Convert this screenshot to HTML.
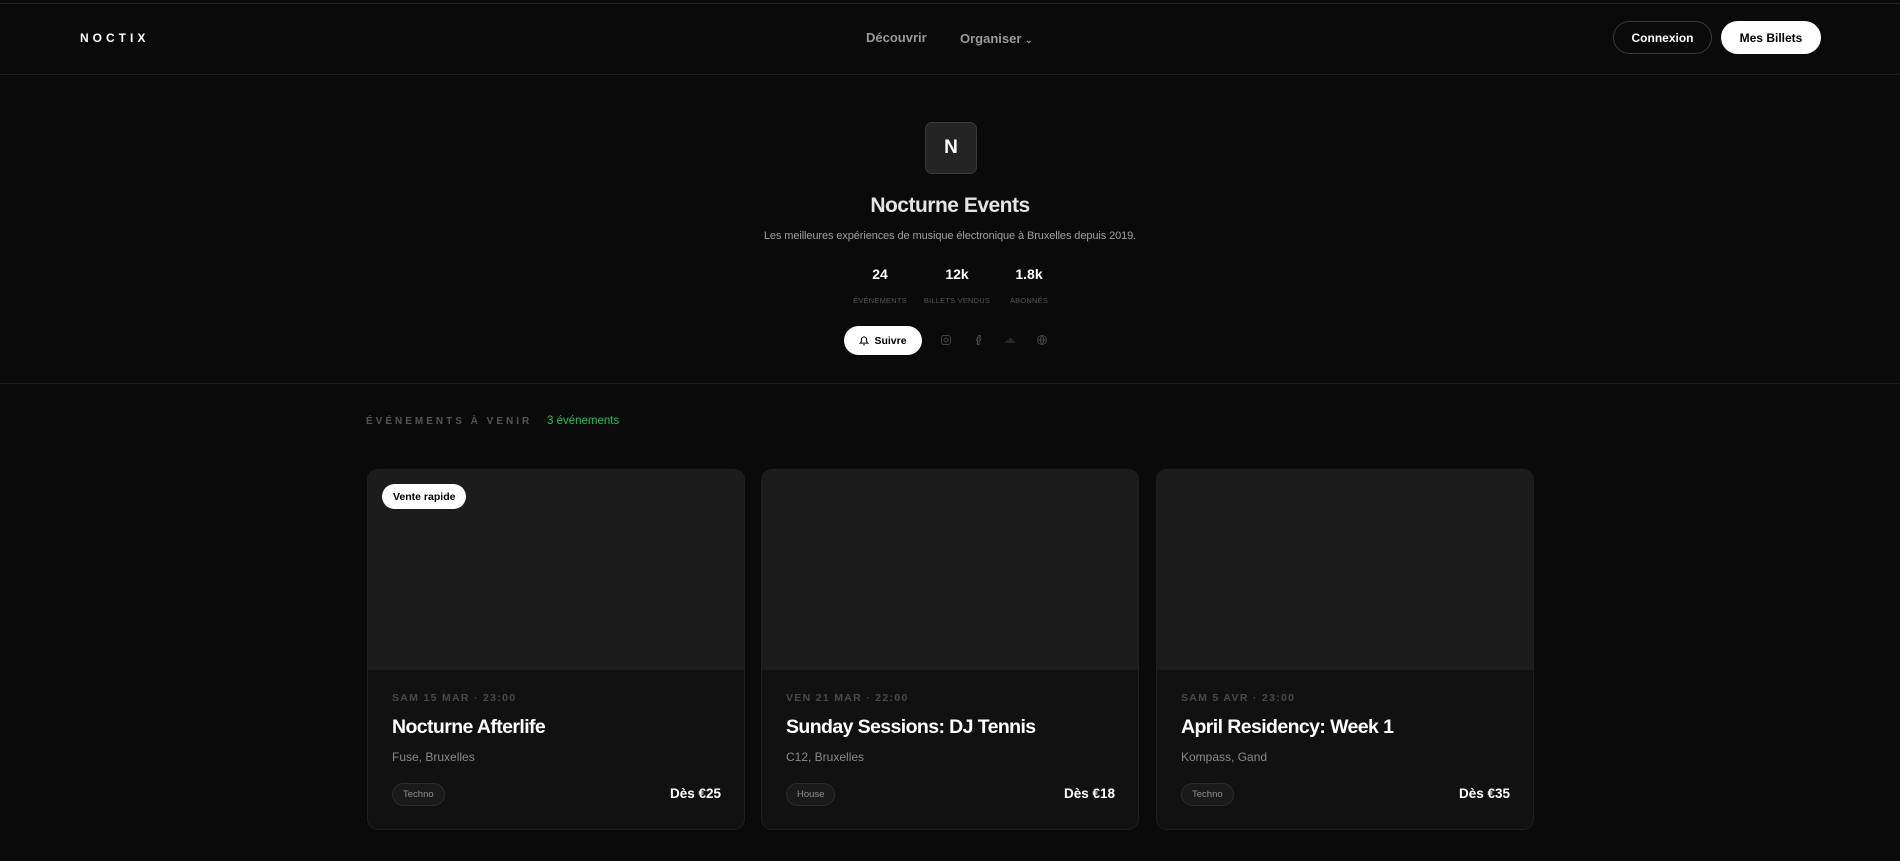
<!DOCTYPE html>
<html><head><meta charset="utf-8"><style>
*{box-sizing:border-box;margin:0;padding:0}
body{width:1900px;height:861px;background:#0a0a0a;font-family:"Liberation Sans",sans-serif;color:#fff;position:relative;overflow:hidden}
.abs{position:absolute}
.topline{left:0;top:3px;width:1900px;height:1px;background:#222}
.nav{left:0;top:74px;width:1900px;height:1px;background:#1e1e1e}
.logo{left:80px;top:31px;font-size:12px;font-weight:bold;letter-spacing:4px}
.navl{top:30px;font-size:13px;color:#9a9a9a;font-weight:bold}
.btn{top:21px;height:33px;border-radius:17px;font-size:12px;font-weight:bold;display:flex;align-items:center;justify-content:center}
.av{left:925px;top:122px;width:52px;height:52px;border-radius:7px;background:#242424;border:1px solid #3a3a3a;display:flex;align-items:center;justify-content:center;font-size:19px;font-weight:bold}
.c{text-align:center;width:400px;margin-left:-200px;white-space:nowrap}
.stn{top:266px;font-size:14px;font-weight:bold}
.stl{top:296px;font-size:7.5px;color:#555;letter-spacing:.2px}
.div{left:0;top:383px;width:1900px;height:1px;background:#1e1e1e}
.card{top:469px;width:378px;height:361px;border-radius:11px;border:1px solid #1f1f1f;background:#111;overflow:hidden}
.img{position:absolute;left:0;top:0;width:100%;height:200px;background:#1c1c1c}
.date{position:absolute;left:24px;top:222px;font-size:10.5px;font-weight:bold;color:#4a4a4a;letter-spacing:1.3px}
.ttl{position:absolute;left:24px;top:246px;font-size:19.5px;font-weight:bold;letter-spacing:-.6px}
.ven{position:absolute;left:24px;top:280px;font-size:12px;color:#8a8a8a}
.tag{position:absolute;left:24px;top:313px;height:23px;padding:0 10px;border-radius:12px;border:1px solid #2c2c2c;background:#1a1a1a;font-size:9.5px;color:#8f8f8f;display:flex;align-items:center}
.pr{position:absolute;right:23px;top:316px;font-size:13.5px;font-weight:bold}
.ic{top:334px;width:12px;height:12px}
</style></head><body>
<div class="abs topline"></div>
<div class="abs logo">NOCTIX</div>
<div class="abs navl" style="left:866px">Découvrir</div>
<div class="abs navl" style="left:960px;top:31px">Organiser <span style="font-size:9px">⌄</span></div>
<div class="abs btn" style="left:1613px;width:99px;border:1px solid #3a3a3a;color:#fff">Connexion</div>
<div class="abs btn" style="left:1721px;width:100px;background:#fff;color:#000">Mes Billets</div>
<div class="abs nav"></div>

<div class="abs av">N</div>
<div class="abs c" style="left:950px;top:194px;font-size:21px;font-weight:bold;color:#e4e4e4;letter-spacing:-.5px">Nocturne Events</div>
<div class="abs c" style="left:950px;top:230px;font-size:11px;color:#a0a0a0;letter-spacing:-.1px">Les meilleures expériences de musique électronique à Bruxelles depuis 2019.</div>
<div class="abs c stn" style="left:880px">24</div>
<div class="abs c stn" style="left:957px">12k</div>
<div class="abs c stn" style="left:1029px">1.8k</div>
<div class="abs c stl" style="left:880px">ÉVÉNEMENTS</div>
<div class="abs c stl" style="left:957px">BILLETS VENDUS</div>
<div class="abs c stl" style="left:1029px">ABONNÉS</div>
<div class="abs btn" style="left:844px;top:326px;width:78px;height:29px;background:#fff;color:#000;font-size:10.5px">
<svg width="10" height="10" viewBox="0 0 24 24" fill="none" stroke="#000" stroke-width="2.5" style="margin-right:5px"><path d="M6 8a6 6 0 0112 0c0 7 3 9 3 9H3s3-2 3-9M10 21h4"/></svg>Suivre</div>
<svg class="abs ic" style="left:940px" viewBox="0 0 24 24" fill="none" stroke="#444" stroke-width="2"><rect x="3" y="3" width="18" height="18" rx="5"/><circle cx="12" cy="12" r="4"/></svg>
<svg class="abs ic" style="left:973px" viewBox="0 0 24 24" fill="none" stroke="#444" stroke-width="2"><path d="M15 3h-2a4 4 0 00-4 4v3H7v3h2v8h3v-8h3l1-3h-4V7a1 1 0 011-1h2z"/></svg>
<svg class="abs ic" style="left:1004px" viewBox="0 0 24 24" fill="none" stroke="#444" stroke-width="2"><path d="M4 18v-3M8 18v-6M12 18V8M16 18V10M20 18v-4"/></svg>
<svg class="abs ic" style="left:1036px" viewBox="0 0 24 24" fill="none" stroke="#444" stroke-width="2"><circle cx="12" cy="12" r="9"/><path d="M3 12h18M12 3a14 14 0 010 18M12 3a14 14 0 000 18"/></svg>
<div class="abs div"></div>

<div class="abs" style="left:366px;top:416px;font-size:10px;font-weight:bold;color:#555;letter-spacing:3px">ÉVÉNEMENTS À VENIR</div>
<div class="abs" style="left:547px;top:415px;font-size:11.5px;color:#22c55e">3 événements</div>

<div class="abs card" style="left:367px"><div class="img"></div>
<div style="position:absolute;left:14px;top:14px;height:25px;padding:0 11px;border-radius:13px;background:#fff;color:#000;font-size:10.5px;font-weight:bold;display:flex;align-items:center">Vente rapide</div>
<div class="date">SAM 15 MAR · 23:00</div><div class="ttl">Nocturne Afterlife</div><div class="ven">Fuse, Bruxelles</div><div class="tag">Techno</div><div class="pr">Dès €25</div></div>
<div class="abs card" style="left:761px"><div class="img"></div>
<div class="date">VEN 21 MAR · 22:00</div><div class="ttl">Sunday Sessions: DJ Tennis</div><div class="ven">C12, Bruxelles</div><div class="tag">House</div><div class="pr">Dès €18</div></div>
<div class="abs card" style="left:1156px"><div class="img"></div>
<div class="date">SAM 5 AVR · 23:00</div><div class="ttl">April Residency: Week 1</div><div class="ven">Kompass, Gand</div><div class="tag">Techno</div><div class="pr">Dès €35</div></div>
</body></html>
